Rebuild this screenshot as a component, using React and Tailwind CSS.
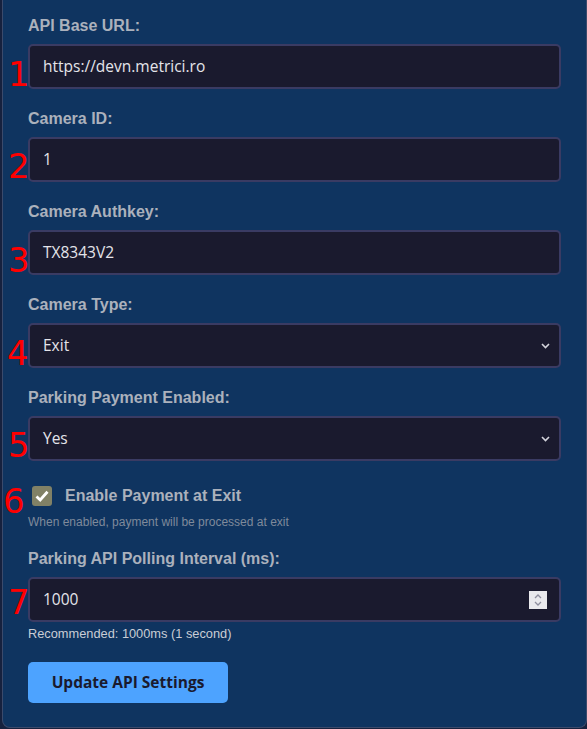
import React from "react";

const labelCls =
  "block text-[16px] leading-[18px] font-bold text-[#abb1bc] mb-[9px]";
const boxCls =
  "h-[45px] rounded-[5px] border-2 border-[#3a3b63] bg-[#1a1a2e] flex items-center pl-[13px] pr-[12px] text-[#e4e4ea] text-[15.5px] font-['Open_Sans',sans-serif]";

function Chevron() {
  return (
    <svg width="9" height="6" viewBox="0 0 9 6" className="ml-auto mr-[-3px]">
      <path d="M1 1 L4.5 4.5 L8 1" fill="none" stroke="#d4d4dc" strokeWidth="1.6" />
    </svg>
  );
}

function Spinner() {
  return (
    <div className="ml-auto mr-[0px] w-[18px] h-[18px] bg-[#e9e9ed] flex items-center justify-center">
      <svg width="10" height="14" viewBox="0 0 10 14">
        <path d="M2 5 L5 2 L8 5" fill="none" stroke="#8e8e9e" strokeWidth="1.3" />
        <path d="M2 9 L5 12 L8 9" fill="none" stroke="#8e8e9e" strokeWidth="1.3" />
      </svg>
    </div>
  );
}

function Field({ label, value, right }) {
  return (
    <div className="mb-[21px]">
      <label className={labelCls}>{label}</label>
      <div className={boxCls}>
        <span>{value}</span>
        {right}
      </div>
    </div>
  );
}

const marks = [
  { n: "1", left: 8, top: 57 },
  { n: "2", left: 8, top: 149 },
  { n: "3", left: 8, top: 243 },
  { n: "4", left: 7, top: 336 },
  { n: "5", left: 8, top: 428 },
  { n: "6", left: 3, top: 484 },
  { n: "7", left: 8, top: 585 },
];

export default function App() {
  return (
    <div className="relative w-full h-[729px] overflow-hidden bg-[#16213e] font-['Liberation_Sans',Arial,sans-serif]">
      <div className="ml-[2px] w-[585px] h-[728px] bg-[#0f3460] border-x border-b border-[#3b4a6b] rounded-b-[8px] pt-[17px] px-[25px]">
        <Field label="API Base URL:" value="https://devn.metrici.ro" />
        <Field label="Camera ID:" value="1" />
        <Field label="Camera Authkey:" value="TX8343V2" />
        <Field label="Camera Type:" value="Exit" right={<Chevron />} />
        <Field label="Parking Payment Enabled:" value="Yes" right={<Chevron />} />

        <div className="mt-[25px] h-[20px] flex items-center">
          <div className="ml-[4px] w-[20px] h-[20px] rounded-[3px] bg-[#818166] flex items-center justify-center">
            <svg width="16" height="16" viewBox="0 0 16 16">
              <path d="M2.5 8.5 L6.2 12 L13.5 3.8" fill="none" stroke="#ffffff" strokeWidth="2.8" />
            </svg>
          </div>
          <span className="ml-[13px] text-[16px] font-bold text-[#abb1bc]">
            Enable Payment at Exit
          </span>
        </div>
        <p className="mt-[9px] text-[12px] leading-[14px] text-[#7f8a9b]">
          When enabled, payment will be processed at exit
        </p>

        <div className="mt-[21px]">
          <label className={labelCls}>Parking API Polling Interval (ms):</label>
          <div className={boxCls}>
            <span>1000</span>
            <Spinner />
          </div>
          <p className="mt-[4px] text-[12.8px] leading-[15px] text-[#c9cdd5]">
            Recommended: 1000ms (1 second)
          </p>
        </div>

        <button className="mt-[21px] w-[200px] h-[41px] rounded-[5px] bg-[#4da3ff] text-[#1a1a2e] text-[15.5px] font-bold font-['Open_Sans',sans-serif]">
          Update API Settings
        </button>
      </div>

      {marks.map((m) => (
        <span
          key={m.n}
          className="absolute text-[34px] leading-[34px] text-[#ff0000] font-['DejaVu_Sans',sans-serif]"
          style={{ left: m.left, top: m.top }}
        >
          {m.n}
        </span>
      ))}
    </div>
  );
}
